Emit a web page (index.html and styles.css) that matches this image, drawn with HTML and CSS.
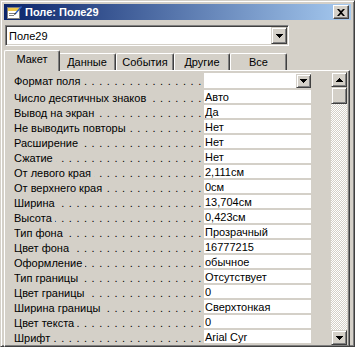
FILE: index.html
```html
<!DOCTYPE html>
<html lang="ru">
  <head>
    <meta charset="UTF-8" />
    <title>Поле: Поле29</title>
    <link rel="stylesheet" href="styles.css">
  </head>
  <body>
    <div class="window">
      <div class="titlebar">
        <svg class="icon" width="16" height="16" viewBox="0 0 16 16" shape-rendering="crispEdges">
          <rect x="1" y="3" width="12" height="11" fill="#fff" stroke="#808080" />
          <rect x="2" y="4" width="11" height="3" fill="#f0c848" />
          <rect x="3" y="9" width="7" height="1" fill="#808080" />
          <rect x="3" y="11" width="5" height="1" fill="#808080" />
          <path d="M9 9 L15 2 L16 3 L10 10 Z" fill="#3060c0" shape-rendering="auto" />
          <path d="M9 9 L10 10 L8 11 Z" fill="#000" shape-rendering="auto" />
        </svg>
        <div class="title">Поле: Поле29</div>
        <div class="close">
          <svg width="8" height="7" viewBox="0 0 8 7">
            <path d="M0 0h2l2 2 2-2h2L5 3.5 8 7H6L4 5 2 7H0l3-3.5z" fill="#000" />
          </svg>
        </div>
      </div>

      <div class="body">
        <div class="combo">
          <div class="combo-text">Поле29</div>
          <div class="btn drop-btn">
            <svg width="7" height="4" shape-rendering="crispEdges"><path d="M0 0h7v1H0zM1 1h5v1H1zM2 2h3v1H2zM3 3h1v1H3z" /></svg>
          </div>
        </div>

        <div class="tabs">
          <div class="tab active" style="width:56px">Макет</div>
          <div class="tab" style="width:58px">Данные</div>
          <div class="tab" style="width:58px">События</div>
          <div class="tab" style="width:56px">Другие</div>
          <div class="tab" style="width:57px">Все</div>
        </div>

        <div class="panel">
          <div class="grid">
            <div class="rows">
              <div class="row first">
                <div class="label"><span class="name">Формат поля</span><span class="dots"></span></div>
                <div class="value value-combo">
                  <div class="btn cell-btn">
                    <svg width="7" height="4" shape-rendering="crispEdges"><path d="M0 0h7v1H0zM1 1h5v1H1zM2 2h3v1H2zM3 3h1v1H3z" /></svg>
                  </div>
                </div>
              </div>
              <div class="row">
                <div class="label"><span class="name">Число десятичных знаков</span><span class="dots"></span></div>
                <div class="value">Авто</div>
              </div>
              <div class="row">
                <div class="label"><span class="name">Вывод на экран</span><span class="dots"></span></div>
                <div class="value">Да</div>
              </div>
              <div class="row">
                <div class="label"><span class="name">Не выводить повторы</span><span class="dots"></span></div>
                <div class="value">Нет</div>
              </div>
              <div class="row">
                <div class="label"><span class="name">Расширение</span><span class="dots"></span></div>
                <div class="value">Нет</div>
              </div>
              <div class="row">
                <div class="label"><span class="name">Сжатие</span><span class="dots"></span></div>
                <div class="value">Нет</div>
              </div>
              <div class="row">
                <div class="label"><span class="name">От левого края</span><span class="dots"></span></div>
                <div class="value">2,111см</div>
              </div>
              <div class="row">
                <div class="label"><span class="name">От верхнего края</span><span class="dots"></span></div>
                <div class="value">0см</div>
              </div>
              <div class="row">
                <div class="label"><span class="name">Ширина</span><span class="dots"></span></div>
                <div class="value">13,704см</div>
              </div>
              <div class="row">
                <div class="label"><span class="name">Высота</span><span class="dots"></span></div>
                <div class="value">0,423см</div>
              </div>
              <div class="row">
                <div class="label"><span class="name">Тип фона</span><span class="dots"></span></div>
                <div class="value">Прозрачный</div>
              </div>
              <div class="row">
                <div class="label"><span class="name">Цвет фона</span><span class="dots"></span></div>
                <div class="value">16777215</div>
              </div>
              <div class="row">
                <div class="label"><span class="name">Оформление</span><span class="dots"></span></div>
                <div class="value">обычное</div>
              </div>
              <div class="row">
                <div class="label"><span class="name">Тип границы</span><span class="dots"></span></div>
                <div class="value">Отсутствует</div>
              </div>
              <div class="row">
                <div class="label"><span class="name">Цвет границы</span><span class="dots"></span></div>
                <div class="value">0</div>
              </div>
              <div class="row">
                <div class="label"><span class="name">Ширина границы</span><span class="dots"></span></div>
                <div class="value">Сверхтонкая</div>
              </div>
              <div class="row">
                <div class="label"><span class="name">Цвет текста</span><span class="dots"></span></div>
                <div class="value">0</div>
              </div>
              <div class="row">
                <div class="label"><span class="name">Шрифт</span><span class="dots"></span></div>
                <div class="value">Arial Cyr</div>
              </div>
            </div>
            <div class="spacer"></div>
            <div class="scrollbar">
              <div class="btn scroll-btn">
                <svg width="7" height="4" shape-rendering="crispEdges"><path d="M3 0h1v1H3zM2 1h3v1H2zM1 2h5v1H1zM0 3h7v1H0z" /></svg>
              </div>
              <div class="btn thumb"></div>
              <div class="track"></div>
              <div class="btn scroll-btn">
                <svg width="7" height="4" shape-rendering="crispEdges"><path d="M0 0h7v1H0zM1 1h5v1H1zM2 2h3v1H2zM3 3h1v1H3z" /></svg>
              </div>
            </div>
          </div>
        </div>
      </div>
    </div>
  </body>
</html>
```

FILE: styles.css
```css
body {
  margin: 0;
  font-family: "Liberation Sans", Arial, sans-serif;
  font-size: 11px;
  color: #000;
  background: #d4d0c8;
}
.window {
  width: 355px;
  height: 347px;
  box-sizing: border-box;
  background-color: #d4d0c8;
  border: 1px solid;
  border-color: #d4d0c8 #404040 #404040 #d4d0c8;
  box-shadow: inset 1px 1px #fff, inset -1px -1px #808080;
  padding: 3px;
  display: flex;
  flex-direction: column;
}
.titlebar {
  height: 18px;
  display: flex;
  align-items: center;
  background: linear-gradient(to right, #0a246a, #a6caf0);
  padding: 0 2px;
}
.icon {
  margin-right: 3px;
}
.title {
  color: #fff;
  font-weight: bold;
  flex-grow: 1;
}

/* 3d raised button */
.btn {
  box-sizing: border-box;
  background-color: #d4d0c8;
  border: 1px solid;
  border-color: #d4d0c8 #404040 #404040 #d4d0c8;
  box-shadow: inset 1px 1px #fff, inset -1px -1px #808080;
  display: flex;
  align-items: center;
  justify-content: center;
}
.close {
  width: 16px;
  height: 14px;
  box-sizing: border-box;
  background-color: #d4d0c8;
  border: 1px solid;
  border-color: #fff #404040 #404040 #fff;
  box-shadow: inset -1px -1px #808080;
  display: flex;
  align-items: center;
  justify-content: center;
}

.body {
  flex: 1;
  display: flex;
  flex-direction: column;
  padding: 5px 1px 0 0;
}
.combo {
  margin-left: 1px;
  width: 284px;
  height: 21px;
  box-sizing: border-box;
  background: #fff;
  border: 1px solid;
  border-color: #808080 #fff #fff #808080;
  box-shadow: inset 1px 1px #404040, inset -1px -1px #d4d0c8;
  padding: 1px;
  display: flex;
  align-items: center;
}
.combo-text {
  flex: 1;
  padding-left: 2px;
}
.drop-btn {
  width: 16px;
  height: 17px;
}

.tabs {
  display: flex;
  align-items: flex-end;
  height: 20px;
  margin-top: 4px;
  padding-left: 2px;
}
.tab {
  height: 17px;
  box-sizing: border-box;
  border-top: 1px solid #fff;
  border-left: 1px solid #fff;
  border-right: 1px solid #404040;
  box-shadow: inset -1px 0 #808080;
  border-radius: 2px 2px 0 0;
  text-align: center;
  line-height: 16px;
}
.tab.active {
  height: 21px;
  margin: 0 -2px -1px;
  padding: 0 2px 2px;
  position: relative;
  z-index: 1;
  background-color: #d4d0c8;
  line-height: 17px;
}

.panel {
  flex: 1;
  margin-bottom: 2px;
  border: 1px solid;
  border-color: #fff #404040 #404040 #fff;
  box-shadow: inset -1px -1px #808080;
  padding: 1px;
  min-height: 0;
}
.grid {
  display: flex;
  height: 100%;
}
.rows {
  width: 305px;
  box-sizing: border-box;
  padding: 1px 0 0 8px;
  overflow: hidden;
}
.row {
  display: flex;
  height: 15px;
}
.row.first {
  height: 17px;
}
.label {
  width: 190px;
  height: 14px;
  display: flex;
  white-space: nowrap;
  overflow: hidden;
  line-height: 16px;
}
.row.first .label {
  height: 16px;
  line-height: 17px;
}
.dots {
  flex: 1;
  overflow: hidden;
  direction: rtl;
  margin-left: 3px;
  padding-right: 2px;
  letter-spacing: 0.75px;
}
.dots::before {
  content: ". . . . . . . . . . . . . . . . . . . . . . . . . . . . . . . . . . . .";
}
.value {
  width: 107px;
  height: 13px;
  box-sizing: border-box;
  background: #fff;
  padding-left: 1px;
  line-height: 15px;
  white-space: nowrap;
  overflow: hidden;
}
.value-combo {
  height: 15px;
  display: flex;
  justify-content: flex-end;
}
.cell-btn {
  width: 15px;
  height: 14px;
  margin-top: 1px;
}

.spacer {
  width: 20px;
}
.scrollbar {
  width: 16px;
  display: flex;
  flex-direction: column;
}
.scroll-btn {
  height: 15px;
}
.thumb {
  height: 17px;
}
.track {
  flex: 1;
  background: conic-gradient(#fff 25%, #d4d0c8 0 50%, #fff 0 75%, #d4d0c8 0) 0 0 / 2px 2px;
}
```
